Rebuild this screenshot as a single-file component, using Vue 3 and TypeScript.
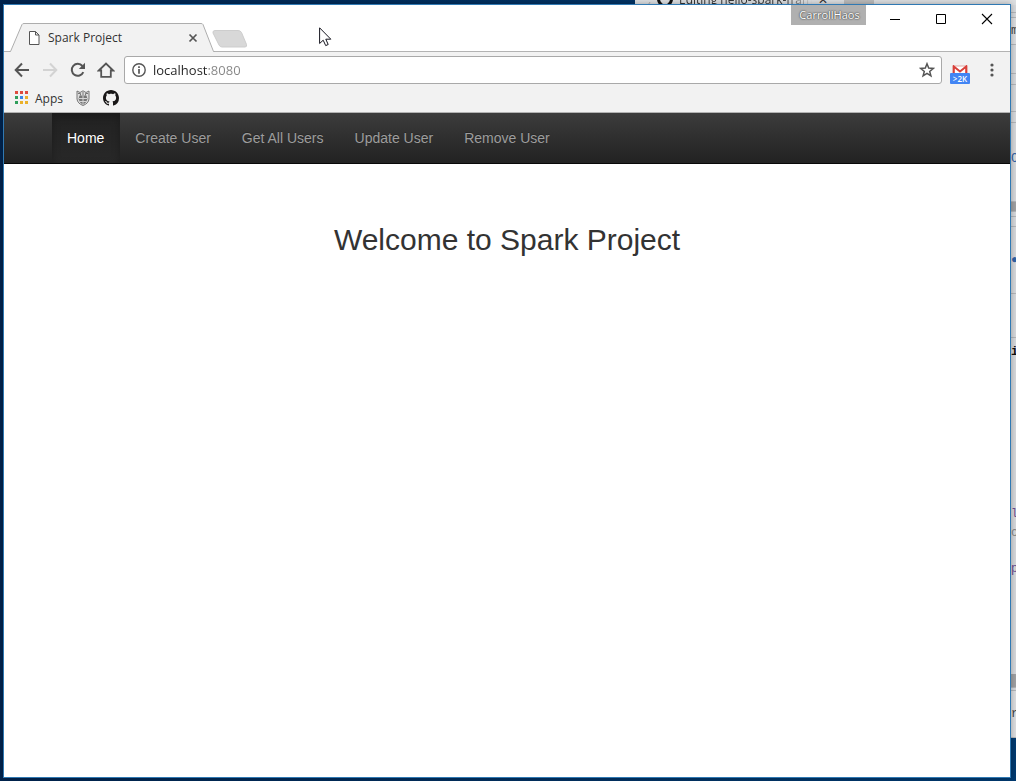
<script setup lang="ts">
interface StripRow {
  height: number
  kind: string
  text?: string
}

const links: string[] = ['Home', 'Create User', 'Get All Users', 'Update User', 'Remove User']

const appColors: string[] = [
  '#dd4b3e', '#dd4b3e', '#dd4b3e',
  '#2f9e5b', '#3b86e8', '#eab02a',
  '#2f9e5b', '#eab02a', '#eab02a',
]

const stripRows: StripRow[] = [
  { height: 13, kind: 'light' },
  { height: 5, kind: 'light' },
  { height: 27, kind: 'page dark', text: 'm' },
  { height: 29, kind: 'light' },
  { height: 11, kind: 'light' },
  { height: 27, kind: 'light' },
  { height: 11, kind: 'light' },
  { height: 72, kind: 'plain link', text: 'C' },
  { height: 7, kind: 'light' },
  { height: 10, kind: 'thumb' },
  { height: 5, kind: 'light' },
  { height: 10, kind: 'light' },
  { height: 67, kind: 'light link', text: '●' },
  { height: 44, kind: 'light' },
  { height: 28, kind: 'plain bold', text: 'i' },
  { height: 138, kind: 'plain' },
  { height: 20, kind: 'plain purple', text: 'l' },
  { height: 18, kind: 'plain muted', text: 'c' },
  { height: 54, kind: 'plain purple', text: 'p' },
  { height: 78, kind: 'plain' },
  { height: 14, kind: 'thumb' },
  { height: 3, kind: 'light' },
  { height: 47, kind: 'page dark', text: 'r.' },
]
</script>

<template>
  <div class="desktop">
    <div class="back-window" aria-hidden="true">
      <div class="back-tabs">
        <svg class="back-edge" width="10" height="5" viewBox="0 0 10 5"><path d="M4 5 7 0" stroke="#aaa" fill="none" /></svg>
        <svg width="16" height="16" viewBox="0 0 16 16"><path fill="#111" fill-rule="evenodd" d="M8 0a8 8 0 0 0-2.500 15.600V12.500a5 5 0 1 1 5 0v3.100A8 8 0 0 0 8 0z" /></svg>
        <span class="back-title">Editing hello-spark-fram</span>
        <span class="back-close">✕</span>
        <span class="back-new"></span>
      </div>
      <div class="strip">
        <div
          v-for="(row, i) in stripRows"
          :key="i"
          :class="['strip-row', row.kind]"
          :style="{ height: row.height + 'px' }"
        >{{ row.text }}</div>
      </div>
    </div>

    <section class="window">
      <header class="titlebar">
        <div class="tab">
          <svg class="tab-shape" viewBox="0 0 206 29" preserveAspectRatio="none">
            <path d="M0 29 2 28 13 1.500Q13.500.5 15 .5H192Q193.500.5 194 1.500L204 28 206 29Z" fill="#f2f2f2" />
            <path d="M0 28.500H1.500L13 1.500Q13.500.5 15 .5H192Q193.500.5 194 1.500L204.500 28.500H206" fill="none" stroke="#adadad" />
          </svg>
          <svg class="page-icon" width="12" height="14" viewBox="0 0 12 14"><path d="M1.500.5H7.500L11 4V13.500H1.500ZM7.500.5V4H11" fill="#fff" stroke="#555" /></svg>
          <span class="tab-title">Spark Project</span>
          <button class="tab-close" type="button" aria-label="Close tab">
            <svg width="10" height="10" viewBox="0 0 10 10"><path d="M1.500 1.500 8.500 8.500M8.500 1.500 1.500 8.500" stroke="#555" stroke-width="1.700" /></svg>
          </button>
        </div>
        <button class="new-tab" type="button" aria-label="New tab">
          <svg width="36" height="18" viewBox="0 0 36 18"><path d="M3 .5H26Q28.500.5 29.500 2.500L34.500 14.500Q35 17 33 17H10Q8 17 7 15L1 3Q.5.5 3 .5Z" fill="#d8d8d8" stroke="#cdcdcd" /></svg>
        </button>
        <div class="controls">
          <button type="button" aria-label="Minimize"><svg width="12" height="12" viewBox="0 0 12 12"><path d="M1 6.500H11" stroke="#000" /></svg></button>
          <button type="button" aria-label="Maximize"><svg width="12" height="12" viewBox="0 0 12 12"><path d="M1.500 1.500H10.500V10.500H1.500Z" fill="none" stroke="#000" /></svg></button>
          <button type="button" aria-label="Close"><svg width="12" height="12" viewBox="0 0 12 12"><path d="M1 1 11 11M11 1 1 11" stroke="#000" stroke-width="1.100" /></svg></button>
        </div>
        <span class="user-badge">CarrollHaos</span>
      </header>

      <div class="chrome">
        <div class="toolbar">
          <button type="button" aria-label="Back"><svg width="16" height="16" viewBox="0 0 16 16"><path d="M15 8H2M8 1.500 1.700 8 8 14.500" fill="none" stroke="#555" stroke-width="2" /></svg></button>
          <button type="button" aria-label="Forward" disabled><svg width="16" height="16" viewBox="0 0 16 16"><path d="M1 8H14M8 1.500 14.300 8 8 14.500" fill="none" stroke="#d3d3d3" stroke-width="2" /></svg></button>
          <button type="button" aria-label="Reload"><svg width="16" height="16" viewBox="0 0 16 16"><path d="M13.300 10.200A6 6 0 1 1 12.400 4" fill="none" stroke="#555" stroke-width="2" /><path d="M15 .8V7H8.800Z" fill="#555" /></svg></button>
          <button type="button" aria-label="Home page"><svg width="18" height="16" viewBox="0 0 18 16"><path d="M1.800 8.500 9 1.500 16.200 8.500H13.800V14.800H4.200V8.500Z" fill="none" stroke="#555" stroke-width="1.800" /></svg></button>
          <div class="omnibox">
            <svg width="14" height="14" viewBox="0 0 14 14"><circle cx="7" cy="7" r="6.200" fill="none" stroke="#555" stroke-width="1.400" /><path d="M7 6V10.800M7 3.200V4.900" stroke="#555" stroke-width="1.700" /></svg>
            <input class="address" type="text" aria-label="Address" value="localhost:8080" />
            <button type="button" aria-label="Bookmark this page"><svg width="16" height="16" viewBox="0 0 16 16"><path d="M8 1.800 9.700 6.100 14.300 6.400 10.700 9.400 11.900 13.800 8 11.300 4.100 13.800 5.300 9.400 1.700 6.400 6.300 6.100Z" fill="none" stroke="#555" stroke-width="1.500" /></svg></button>
          </div>
          <button class="mail" type="button" aria-label="Mail">
            <svg width="16" height="12" viewBox="0 0 16 12"><path d="M1 1H15V12H1Z" fill="#fff" stroke="#e3a9a5" /><path d="M1.800 12V1.500L8 6.500 14.200 1.500V12" fill="none" stroke="#d9403a" stroke-width="2" /></svg>
            <span>&gt;2K</span>
          </button>
          <button class="menu" type="button" aria-label="Menu"><svg width="4" height="14" viewBox="0 0 4 14"><g fill="#555"><circle cx="2" cy="2" r="1.600" /><circle cx="2" cy="7" r="1.600" /><circle cx="2" cy="12" r="1.600" /></g></svg></button>
        </div>
        <div class="bookmarks">
          <a href="#" class="apps">
            <svg width="13" height="13" viewBox="0 0 13 13"><rect v-for="(c, i) in appColors" :key="i" :x="(i % 3) * 5" :y="Math.floor(i / 3) * 5" width="3" height="3" :fill="c" /></svg>
            <span>Apps</span>
          </a>
          <a href="#" aria-label="Crest">
            <svg width="14" height="16" viewBox="0 0 14 16"><path d="M1 1 4 2.500 7 .8 10 2.500 13 1V9Q12.500 13.500 7 15.500 1.500 13.500 1 9Z" fill="#dedede" stroke="#777" /><path d="M3.500 5.500H10.500L11.500 9 9.500 13 7 14.500 4.500 13 2.500 9Z" fill="#777" /><path d="M2 3.500H4.500V5.500M12 3.500H9.500V5.500M7 2V5" stroke="#777" fill="none" /><path d="M7 6V14M3 8.500H11M3.500 11.500H10.500" stroke="#d5d5d5" fill="none" /></svg>
          </a>
          <a href="#" aria-label="GitHub">
            <svg width="16" height="16" viewBox="0 0 16 16"><path fill="#191717" fill-rule="evenodd" d="M8 0C3.580 0 0 3.580 0 8c0 3.540 2.290 6.530 5.470 7.590.4.070.55-.17.55-.38 0-.19-.01-.82-.01-1.490-2.010.37-2.530-.49-2.690-.94-.09-.23-.48-.94-.82-1.130-.28-.15-.68-.52-.01-.53.63-.01 1.080.58 1.230.82.72 1.210 1.870.87 2.330.66.07-.52.28-.87.51-1.070-1.780-.2-3.640-.89-3.640-3.950 0-.87.31-1.590.82-2.150-.08-.2-.36-1.020.08-2.120 0 0 .67-.21 2.200.82.64-.18 1.320-.27 2-.27s1.360.09 2 .27c1.530-1.040 2.200-.82 2.200-.82.44 1.100.16 1.920.08 2.120.51.56.82 1.270.82 2.150 0 3.070-1.870 3.750-3.650 3.950.29.25.54.73.54 1.480 0 1.070-.01 1.930-.01 2.200 0 .21.15.46.55.38A8.010 8.010 0 0 0 16 8c0-4.420-3.580-8-8-8z" /></svg>
          </a>
        </div>
      </div>

      <nav class="navbar">
        <a v-for="(link, i) in links" :key="link" href="#" :class="{ active: i === 0 }">{{ link }}</a>
      </nav>
      <main class="content">
        <h1>Welcome to Spark Project</h1>
      </main>
    </section>

    <svg class="cursor" width="13" height="20" viewBox="0 0 13 20" aria-hidden="true"><path d="M.6.8V16.500L4.200 13.200 6.700 18.600 9.200 17.500 6.800 12.200H11.800Z" fill="#fff" stroke="#15151f" /></svg>
  </div>
</template>

<style>
body {
  margin: 0;
}
</style>

<style scoped>
.desktop {
  position: relative;
  box-sizing: border-box;
  min-height: 100vh;
  padding: 4px 5px 3px 3px;
  display: flex;
  overflow: hidden;
  background: linear-gradient(90deg, #00244f, #023263 60%, #003a70);
  font-family: "Open Sans", "Noto Sans", sans-serif;
  font-size: 12px;
  color: #333;
}
button {
  display: flex;
  align-items: center;
  justify-content: center;
  padding: 0;
  border: 0;
  background: none;
  font: inherit;
}
svg {
  display: block;
  flex: none;
}

.back-window {
  position: absolute;
  top: 0;
  left: 635px;
  right: 0;
  height: 738px;
  background: #d6d8db;
  overflow: hidden;
}
.back-tabs {
  height: 5px;
  display: flex;
  align-items: flex-end;
  gap: 4px;
  padding-left: 8px;
  background: #dcdee0;
}
.back-tabs svg {
  margin-bottom: -2px;
}
.back-title {
  width: 133px;
  margin-left: 2px;
  line-height: 16px;
  margin-bottom: -3px;
  white-space: nowrap;
  mask-image: linear-gradient(90deg, #000 80%, transparent);
}
.back-close {
  margin: 0 12px -2px 2px;
  line-height: 14px;
}
.back-new {
  width: 30px;
  height: 5px;
  background: #bbb;
}
.strip {
  width: 5px;
  margin-left: auto;
  margin-top: -5px;
}
.strip-row {
  box-sizing: border-box;
  display: flex;
  align-items: center;
  font-family: "Liberation Mono", monospace;
  font-size: 12px;
  border-bottom: 1px solid #b4b6b9;
}
.strip-row.plain {
  border-bottom-color: transparent;
}
.strip-row.thumb {
  background: #a0a1a3;
}
.strip-row.page {
  background: #dcdddf;
}
.strip-row.dark {
  color: #444;
}
.strip-row.link {
  color: #2f62a6;
}
.strip-row.bold {
  color: #111;
  font-weight: bold;
}
.strip-row.purple {
  color: #6c4c91;
}
.strip-row.muted {
  color: #888;
}

.window {
  position: relative;
  flex: 1;
  display: flex;
  flex-direction: column;
  border: 1px solid #3079b3;
  background: #fff;
  box-shadow: 0 0 6px rgba(0, 0, 0, 0.3);
}
.titlebar {
  position: relative;
  height: 46px;
  display: flex;
  align-items: flex-end;
  padding-left: 5px;
}
.tab {
  position: relative;
  z-index: 1;
  box-sizing: border-box;
  width: 206px;
  height: 29px;
  margin-bottom: -1px;
  padding: 0 17px 0 19px;
  display: flex;
  align-items: center;
  gap: 8px;
}
.tab-shape {
  position: absolute;
  inset: 0;
  width: 100%;
  height: 100%;
}
.page-icon,
.tab-title,
.tab-close {
  position: relative;
}
.tab-title {
  flex: 1;
}
.new-tab {
  margin: 0 0 3px -3px;
}
.controls {
  margin-left: auto;
  align-self: flex-start;
  display: flex;
}
.controls button {
  width: 46px;
  height: 28px;
}
.user-badge {
  position: absolute;
  top: 0;
  right: 144px;
  box-sizing: border-box;
  width: 75px;
  padding-left: 2px;
  line-height: 20px;
  text-align: center;
  font-size: 11px;
  color: #fff;
  background: #b0b0b0;
  text-shadow: 0 0 2px #333, 0 0 1px #444;
}

.chrome {
  background: #f2f2f2;
  border-top: 1px solid #b3b3b3;
  border-bottom: 1px solid #b3b3b3;
}
.toolbar {
  display: flex;
  align-items: center;
  height: 28px;
  padding: 4px 4px 0;
}
.toolbar > button {
  width: 28px;
  height: 28px;
}
.omnibox {
  flex: 1;
  box-sizing: border-box;
  height: 28px;
  margin-left: 4px;
  padding: 0 6px 0 7px;
  display: flex;
  align-items: center;
  gap: 7px;
  background: #fff;
  border: 1px solid #a9a9a9;
  border-radius: 3px;
}
.address {
  flex: 1;
  min-width: 0;
  padding: 0;
  border: 0;
  outline: 0;
  font: 13px/20px "Open Sans", "Noto Sans", sans-serif;
  color: transparent;
  background: linear-gradient(90deg, #222 55px, #858585 55px);
  background-clip: text;
}
.toolbar .mail {
  flex-direction: column;
  width: 20px;
  height: 20px;
  margin: 8px 8px 0;
}
.mail span {
  width: 20px;
  margin-top: -4px;
  line-height: 11px;
  font-size: 8px;
  font-weight: 600;
  color: #fff;
  background: #4285f4;
  border-radius: 1px;
}
.bookmarks {
  display: flex;
  align-items: center;
  gap: 13px;
  height: 28px;
  padding: 0 11px;
}
.bookmarks a {
  color: #333;
  text-decoration: none;
}
.apps {
  display: flex;
  align-items: center;
  gap: 7px;
}
.apps svg {
  margin-bottom: 1px;
}

.navbar {
  display: flex;
  padding: 0 48px;
  background: linear-gradient(#3c3c3c, #222);
  border-bottom: 1px solid #080808;
  font: 14px/20px "Liberation Sans", Arial, sans-serif;
}
.navbar a {
  padding: 15px 16px 15px 15px;
  color: #9d9d9d;
  text-decoration: none;
  text-shadow: 0 -1px 0 rgba(0, 0, 0, 0.25);
}
.navbar a.active {
  color: #fff;
  background: linear-gradient(#222, #282828);
  box-shadow: inset 0 3px 9px rgba(0, 0, 0, 0.25);
}
.content {
  padding: 59px 15px 0;
}
.content h1 {
  margin: 0;
  text-align: center;
  font: 500 30px/33px "Liberation Sans", Arial, sans-serif;
  color: #333;
}
.cursor {
  position: absolute;
  left: 319px;
  top: 27px;
}
</style>
